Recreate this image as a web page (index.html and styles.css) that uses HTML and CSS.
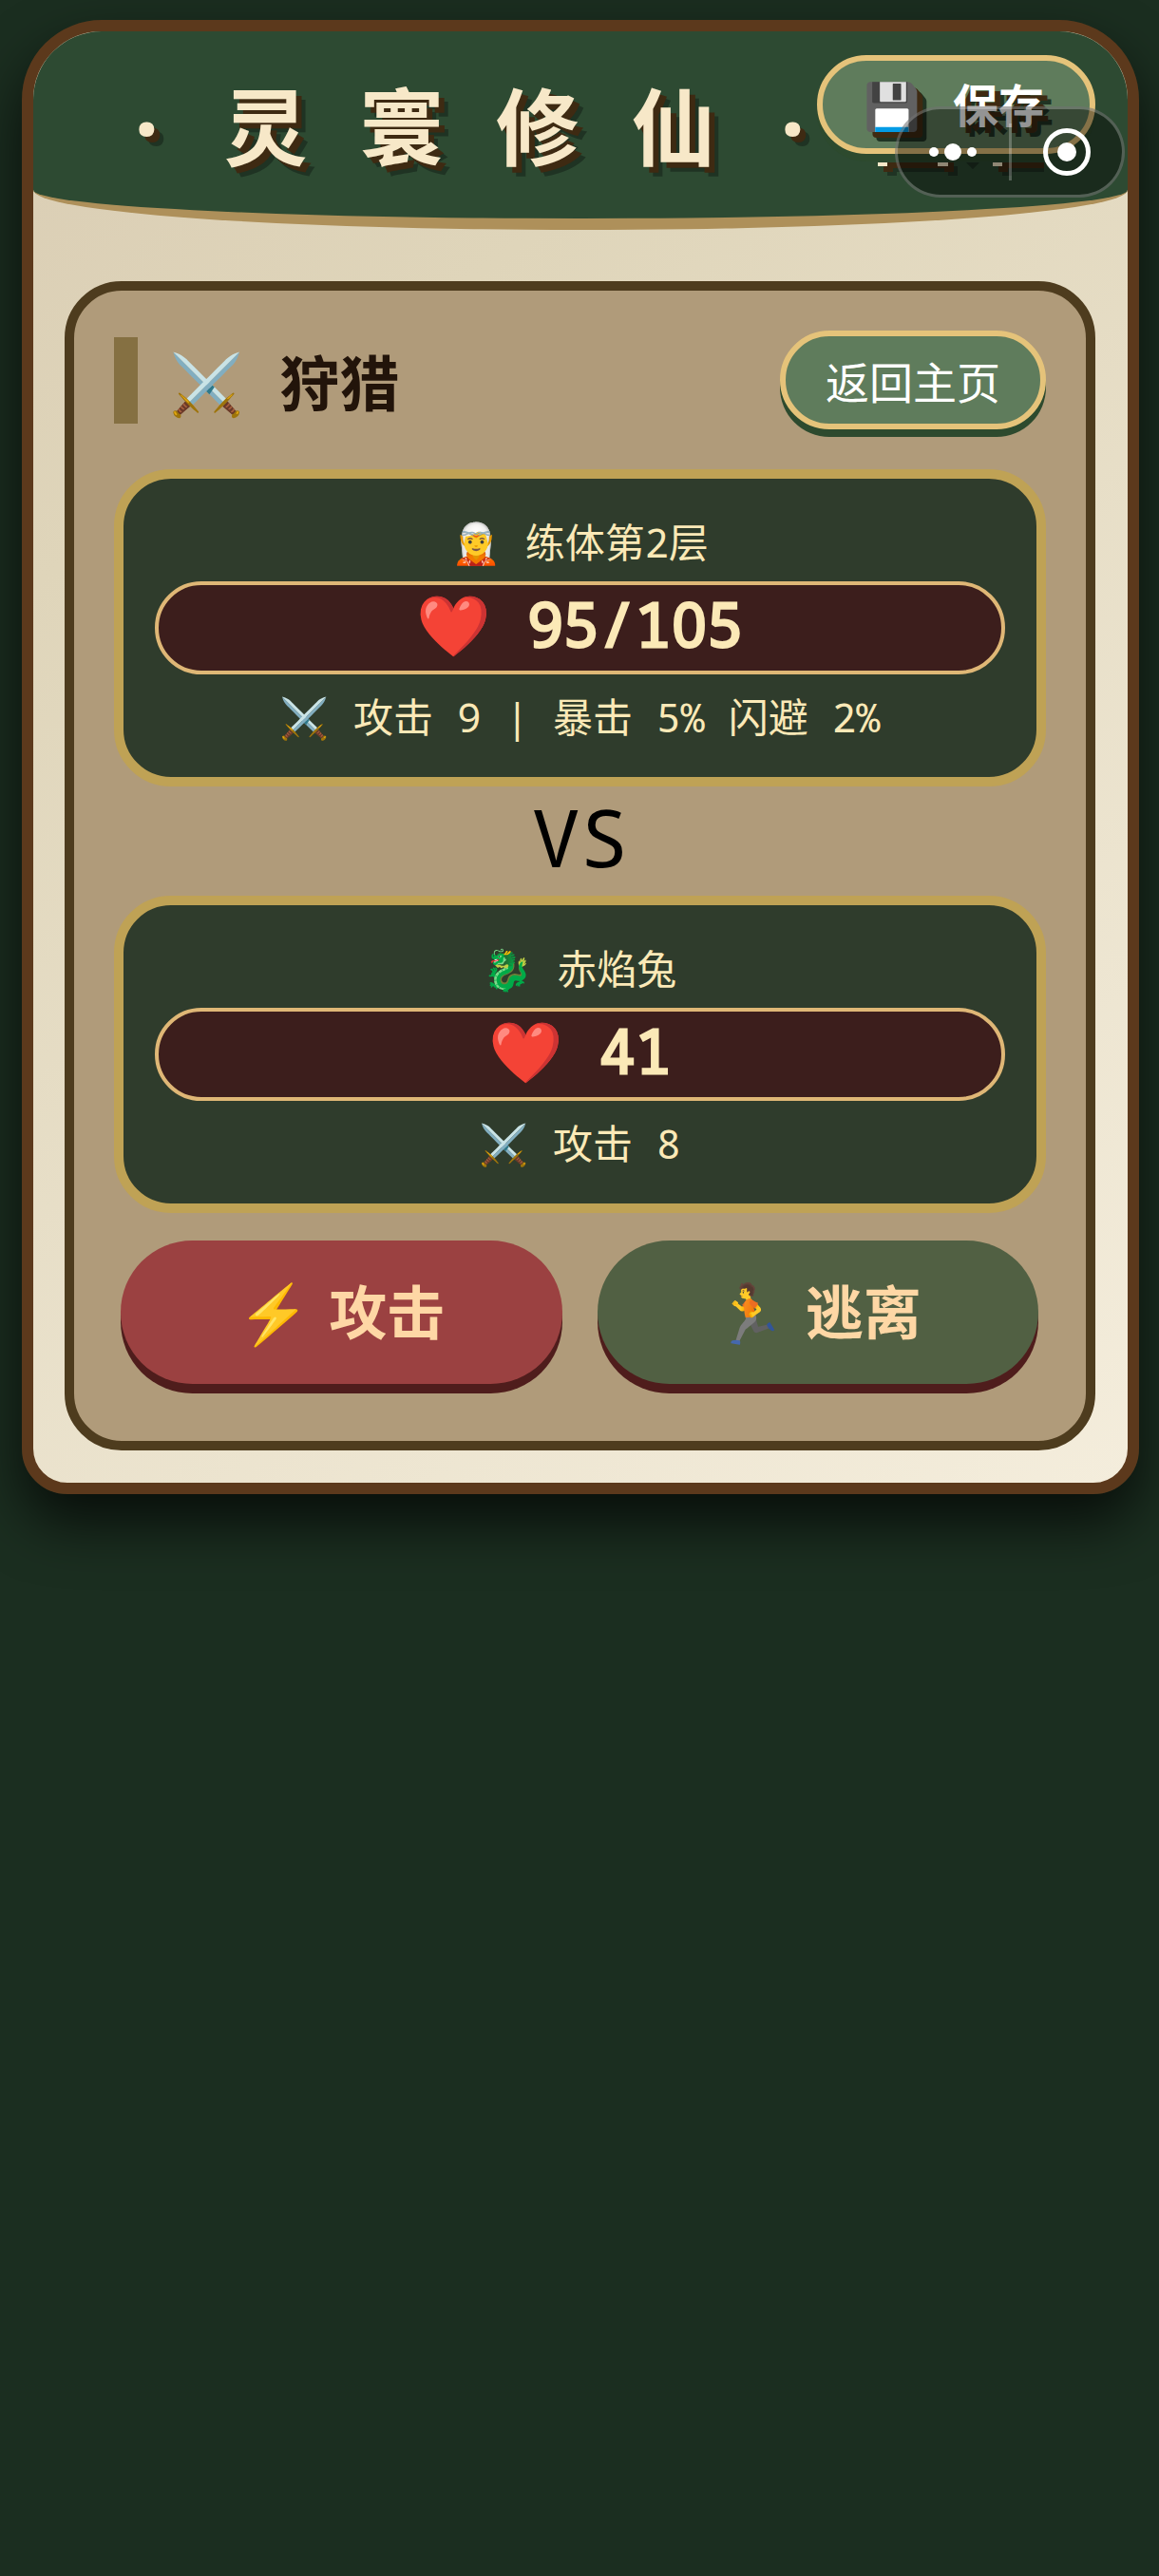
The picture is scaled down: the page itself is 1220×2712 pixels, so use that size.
FILE: index.html
```
<!DOCTYPE html>
<html lang="zh-CN">
<head>
<meta charset="utf-8">
<meta name="viewport" content="width=device-width, initial-scale=1">
<title>灵寰修仙</title>
<link rel="stylesheet" href="styles.css">
</head>
<body>
<div class="capsule">
  <button class="capsule-button" type="button" aria-label="更多">
    <svg width="60" height="60" viewBox="0 0 60 60" fill="#fff"><circle cx="10" cy="30" r="5"/><circle cx="30" cy="30" r="9"/><circle cx="50" cy="30" r="5"/></svg>
  </button>
  <button class="capsule-button" type="button" aria-label="关闭">
    <svg width="60" height="60" viewBox="0 0 60 60"><circle cx="30" cy="30" r="22.5" fill="none" stroke="#fff" stroke-width="5"/><circle cx="30" cy="30" r="10" fill="#fff"/></svg>
  </button>
</div>
<main class="scroll">
  <header class="banner">
    <h1 class="banner-title"><span>·</span><span>灵</span><span>寰</span><span>修</span><span>仙</span><span>·</span></h1>
    <svg class="banner-trace" width="192" height="20" viewBox="0 0 192 20">
      <path fill="#1f3323" d="M10 4h74v10h-10v-4H20v4H10zM93 0h14l-7 7zM131 4h44v6h-34v4h-10z"/>
      <path fill="#3e2a12" d="M6 0h74v10h-10V6H16v4H6zM127 0h48v6h-38v4h-10z"/>
      <path fill="#f7e8c8" d="M0 0h10v4H0zM63 0h11v4H63zM121 0h10v4h-10z"/>
    </svg>
    <button class="pill pill-save" type="button"><span>💾</span><span>保存</span></button>
  </header>
  <section class="panel">
    <div class="panel-head">
      <h2 class="panel-title"><span>⚔️</span><span>狩猎</span></h2>
      <button class="pill pill-back" type="button">返回主页</button>
    </div>
    <article class="fighter">
      <p class="line"><span>🧝</span> 练体第2层</p>
      <p class="health"><span>❤️</span><span class="digits">95/1<span class="zero">0</span>5</span></p>
      <p class="line"><span>⚔️</span> 攻击 9 | 暴击 5% 闪避 2%</p>
    </article>
    <p class="versus">VS</p>
    <article class="fighter">
      <p class="line"><span>🐉</span> 赤焰兔</p>
      <p class="health"><span>❤️</span><span class="digits">41</span></p>
      <p class="line"><span>⚔️</span> 攻击 8</p>
    </article>
    <div class="actions">
      <button class="action action-attack" type="button"><span>⚡</span><span>攻击</span></button>
      <button class="action action-flee" type="button"><span>🏃</span><span>逃离</span></button>
    </div>
  </section>
</main>
</body>
</html>
```
FILE: styles.css
```
* { box-sizing: border-box; }

body {
  margin: 0;
  min-height: 100vh;
  padding: 21px 21px 48px 23px;
  background: #1b2e20;
  font-family: "Droid Sans Mono", "Noto Sans Mono", "DejaVu Sans Mono", "Noto Sans CJK SC", "Noto Color Emoji", monospace;
}

h1, h2, p { margin: 0; }

button {
  border: 0;
  font-family: "Noto Sans CJK SC", "Noto Color Emoji", sans-serif;
  cursor: pointer;
}

.scroll {
  border: 12px solid #5c391c;
  border-radius: 84px 84px 48px 48px;
  background: linear-gradient(145deg, #dacdb4, #dfd5ba 25%, #f4eddc);
  box-shadow: 0 30px 60px rgba(0, 0, 0, 0.7);
}

.banner {
  position: relative;
  height: 209px;
  padding: 56px 0 0 93px;
  border-bottom: 12px solid #ae905a;
  border-radius: 72px 72px 50% 50% / 72px 72px 42px 42px;
  background: #2d4a32;
  text-shadow: 6px 6px 0 #3e2a12, 10px 10px 0 #1f3323;
}

.banner-title {
  display: flex;
  gap: 55px;
  color: #f7e8c8;
  font-size: 88px;
  line-height: 88px;
}

.banner-trace {
  position: absolute;
  top: 138px;
  right: 71px;
}

.pill {
  height: 104px;
  border: 6px solid #e5c37a;
  border-radius: 52px;
  background: #5f7c5c;
  box-shadow: 0 8px 0 #2d4a2e;
  color: #fff;
}

.pill-save {
  position: absolute;
  top: 25px;
  right: 34px;
  display: flex;
  align-items: center;
  gap: 34px;
  padding: 0 48px 5px 43px;
  font-size: 48px;
  font-weight: 700;
  text-shadow: inherit;
}

.pill-back {
  padding: 0 42px;
  font-size: 46px;
}

.capsule {
  position: absolute;
  z-index: 1;
  top: 112px;
  right: 36px;
  display: flex;
  width: 242px;
  height: 96px;
  padding: 15px 0;
  border: 3px solid rgba(255, 255, 255, 0.25);
  border-radius: 48px;
  background: rgba(0, 0, 0, 0.42);
}

.capsule-button {
  flex: 1;
  padding: 0;
  background: none;
}

.capsule-button + .capsule-button {
  border-left: 3px solid rgba(255, 255, 255, 0.25);
}

.capsule-button svg { display: block; margin: auto; }

.panel {
  margin: 54px 34px 34px 33px;
  padding: 42px;
  border: 10px solid #4e3c1e;
  border-radius: 60px;
  background: #b09b7a;
}

.panel-head {
  display: flex;
  align-items: center;
  justify-content: space-between;
  margin-bottom: 42px;
}

.panel-title {
  display: flex;
  gap: 38px;
  padding: 5px 0 0 33px;
  border-left: 25px solid #857042;
  color: #22140a;
  font-size: 63px;
  line-height: 86px;
}

.fighter {
  display: flex;
  flex-direction: column;
  gap: 10px;
  padding: 32px 33px;
  border: 10px solid #bfa255;
  border-radius: 60px;
  background: #2f3c2c;
  color: #fbe9b7;
  text-align: center;
}

.line {
  padding-top: 3px;
  font-size: 42px;
  line-height: 63px;
}

.health {
  display: flex;
  justify-content: center;
  gap: 38px;
  padding-bottom: 8px;
  border: 4px solid #dfb776;
  border-radius: 49px;
  background: #3c1e1c;
  font-size: 63px;
  line-height: 82px;
}

.digits { -webkit-text-stroke: 3px currentColor; }

/* plain zero, without the slash of the monospaced face */
.zero {
  padding: 0 1px;
  font-family: "Noto Sans", sans-serif;
}

.versus {
  padding-bottom: 9px;
  font-size: 84px;
  line-height: 106px;
  text-align: center;
}

.actions {
  display: grid;
  grid-template-columns: 1fr 1fr;
  gap: 37px;
  margin: 29px 8px 18px 7px;
}

.action {
  display: flex;
  align-items: center;
  justify-content: center;
  gap: 20px;
  height: 151px;
  padding-bottom: 8px;
  border-radius: 76px;
  box-shadow: 0 10px 0 #4f1d1c;
  color: #fed7a5;
  font-size: 61px;
  font-weight: 700;
}

.action-attack { background: #9b4141; }
.action-flee { background: #516043; }
```
